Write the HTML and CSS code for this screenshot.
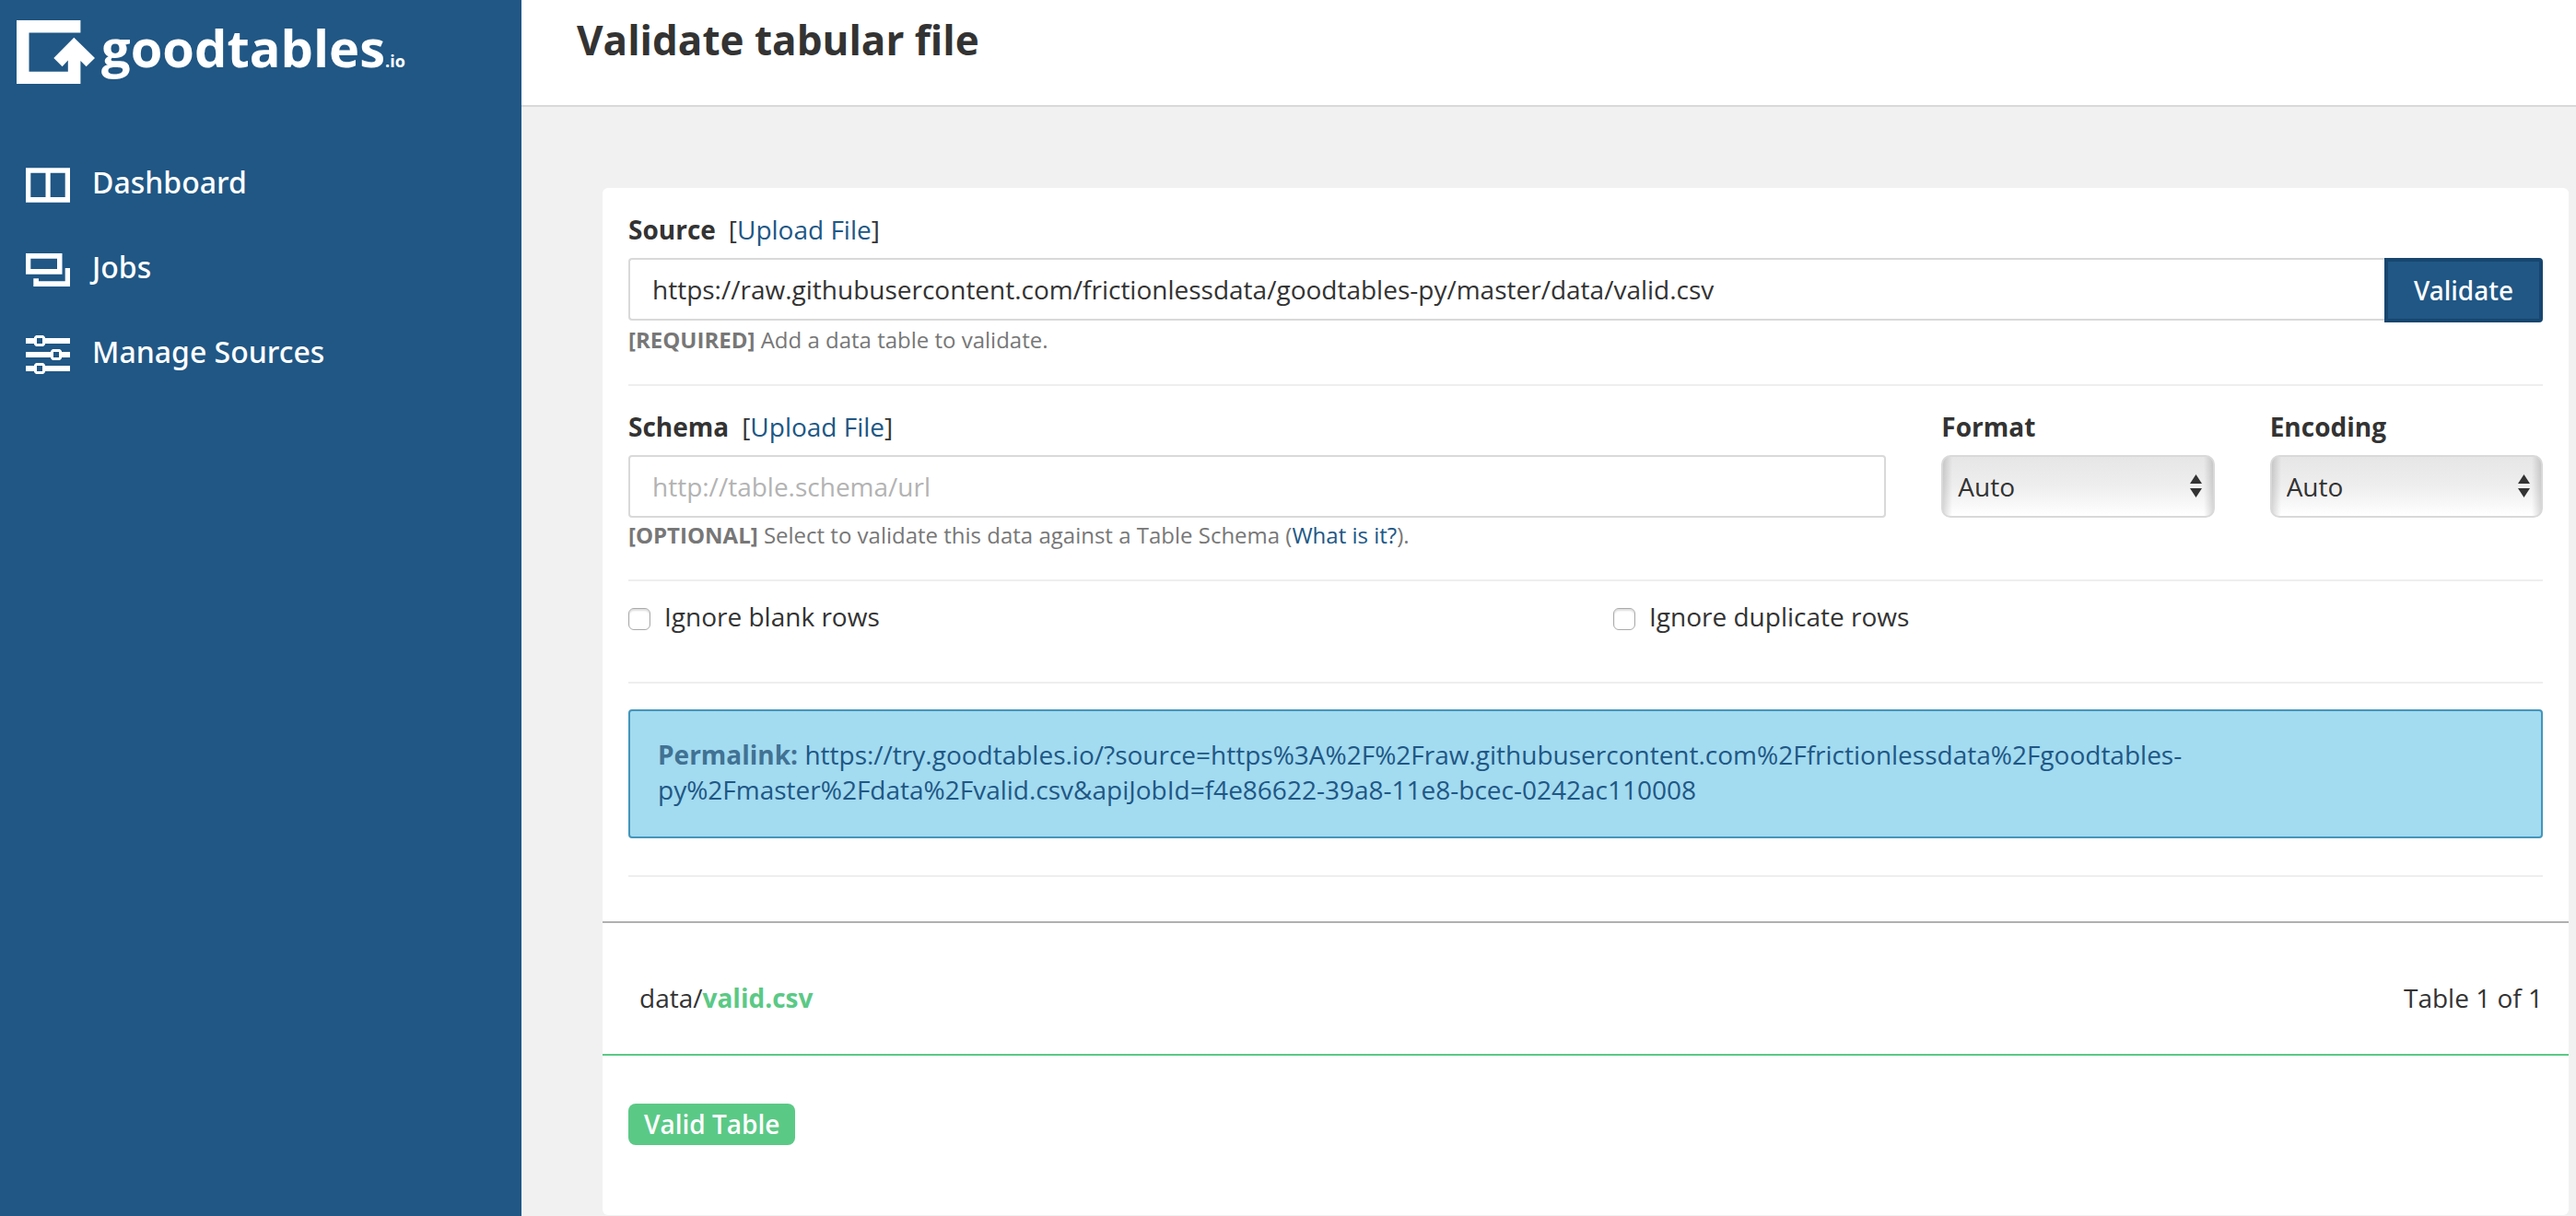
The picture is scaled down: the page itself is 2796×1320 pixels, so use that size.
FILE: index.html
```html
<!DOCTYPE html>
<html lang="en">
<head>
  <meta charset="utf-8">
  <meta name="viewport" content="width=device-width, initial-scale=1">
  <title>Validate tabular file - goodtables.io</title>
  <link rel="stylesheet" href="styles.css">
</head>
<body>
  <div class="app">
    <aside class="sidebar">
      <a class="brand" href="#">
        <svg class="brand-mark" width="86" height="70" viewBox="0 0 86 70" aria-hidden="true">
          <path fill="currentColor" d="M0 0H69.4V13.5H13.5V55.7H55.8V43.5L49.6 50.2L40.3 41L62.3 18.7L85 41L75.6 50.2L69.4 44V69H0Z"/>
        </svg>
        <span class="brand-name">goodtables<span class="brand-tld">.io</span></span>
      </a>
      <nav class="nav">
        <a class="nav-link" href="#">
          <svg class="nav-icon" width="48" height="56" viewBox="0 0 48 56" aria-hidden="true">
            <path fill="currentColor" fill-rule="evenodd" d="M0 12.300H48V49.700H0ZM5.300 17.700V44H21.500V17.700ZM26.700 17.700V44H42.700V17.700Z"/>
          </svg>
          Dashboard
        </a>
        <a class="nav-link" href="#">
          <svg class="nav-icon" width="48" height="56" viewBox="0 0 48 56" aria-hidden="true">
            <path fill="currentColor" fill-rule="evenodd" d="M0 13H39.5V35.7H0ZM5.3 18.7V30H34V18.7ZM42.7 29H48V49H8.3V40.3H14V43.3H42.7Z"/>
          </svg>
          Jobs
        </a>
        <a class="nav-link" href="#">
          <svg class="nav-icon" width="48" height="56" viewBox="0 0 48 56" aria-hidden="true">
            <path fill="currentColor" fill-rule="evenodd" d="M0 13H9V12L11 10H19L21 12V13H48V19H21V20L19 22H11L9 20V19H0ZM12 13V19H18V13ZM0 28H27V27L29 25H37L39 27V28H48V34H39V35L37 37H29L27 35V34H0ZM30 28V34H36V28ZM0 43H9V42L11 40H19L21 42V43H48V49H21V50L19 52H11L9 50V49H0ZM12 43V49H18V43Z"/>
          </svg>
          Manage Sources
        </a>
      </nav>
    </aside>

    <main class="main">
      <header class="page-header">
        <h1 class="page-title">Validate tabular file</h1>
      </header>

      <div class="content">
        <div class="panel">
          <form class="form">
            <section class="section">
              <div class="field-head">
                <label class="field-label" for="source">Source</label>
                <span>[<a href="#">Upload File</a>]</span>
              </div>
              <div class="input-group">
                <input class="text-input" id="source" type="text" value="https://raw.githubusercontent.com/frictionlessdata/goodtables-py/master/data/valid.csv">
                <button class="validate-button" type="submit">Validate</button>
              </div>
              <p class="help"><strong>[REQUIRED]</strong> Add a data table to validate.</p>
            </section>

            <section class="section schema-grid">
              <div class="schema-field">
                <div class="field-head">
                  <label class="field-label" for="schema">Schema</label>
                  <span>[<a href="#">Upload File</a>]</span>
                </div>
                <input class="text-input" id="schema" type="text" placeholder="http://table.schema/url">
                <p class="help"><strong>[OPTIONAL]</strong> Select to validate this data against a Table Schema (<a href="#">What is it?</a>).</p>
              </div>
              <div class="select-field">
                <div class="field-head"><label class="field-label" for="format">Format</label></div>
                <select class="select" id="format"><option>Auto</option></select>
              </div>
              <div class="select-field">
                <div class="field-head"><label class="field-label" for="encoding">Encoding</label></div>
                <select class="select" id="encoding"><option>Auto</option></select>
              </div>
            </section>

            <section class="section options">
              <label class="option"><input class="checkbox" type="checkbox">Ignore blank rows</label>
              <label class="option"><input class="checkbox" type="checkbox">Ignore duplicate rows</label>
            </section>

            <section class="section permalink-section">
              <div class="permalink">
                <strong>Permalink:</strong>
                <a href="#">https://try.goodtables.io/?source=https%3A%2F%2Fraw.githubusercontent.com%2Ffrictionlessdata%2Fgoodtables-py%2Fmaster%2Fdata%2Fvalid.csv&amp;apiJobId=f4e86622-39a8-11e8-bcec-0242ac110008</a>
              </div>
            </section>
          </form>

          <section class="report">
            <div class="report-head">
              <span>data/<strong class="report-file">valid.csv</strong></span>
              <span>Table 1 of 1</span>
            </div>
            <div class="report-body">
              <span class="badge">Valid Table</span>
            </div>
          </section>
        </div>
      </div>
    </main>
  </div>
</body>
</html>
```
FILE: styles.css
```css
*,
*::before,
*::after {
  box-sizing: border-box;
}

body {
  margin: 0;
  background: #f1f1f1;
  color: #333;
  font-family: "Open Sans", "Noto Sans", sans-serif;
  font-size: 28px;
  line-height: 40px;
}

a {
  color: #205785;
  text-decoration: none;
}

.app {
  display: flex;
  min-height: 100vh;
}

/* Sidebar */
.sidebar {
  flex: 0 0 566px;
  background: #205785;
  color: #fff;
}

.brand {
  display: flex;
  align-items: flex-start;
  gap: 6px;
  height: 152px;
  padding: 13px 18px 0;
  color: inherit;
}

.brand-mark {
  margin-top: 9px;
}

.brand-name {
  font-size: 56px;
  font-weight: 700;
  line-height: 76px;
}

.brand-tld {
  font-size: 18px;
}

.nav-link {
  display: flex;
  align-items: center;
  gap: 24px;
  padding: 0 28px;
  color: inherit;
  font-family: "Noto Sans", sans-serif;
  font-size: 32px;
  font-weight: 500;
  line-height: 92px;
}

/* Page */
.main {
  flex: 1;
  min-width: 0;
}

.page-header {
  padding: 13px 60px 41px;
  border-bottom: 2px solid #d9d9d9;
  background: #fff;
}

.page-title {
  margin: 0;
  font-size: 44px;
  font-weight: 700;
  line-height: 60px;
}

.content {
  padding: 88px 8px 0 88px;
}

.panel {
  border-radius: 6px;
  background: #fff;
}

/* Form */
.form {
  padding: 1px 28px 48px;
}

.section {
  padding: 24px 0 31px;
  border-bottom: 2px solid #eee;
}

.field-head {
  display: flex;
  gap: 14px;
  margin-bottom: 11px;
}

.field-label {
  font-weight: 700;
}

.input-group {
  display: flex;
  align-items: flex-start;
}

.text-input {
  display: block;
  width: 100%;
  height: 68px;
  padding: 0 24px;
  border: 2px solid #d9d9d9;
  border-radius: 4px;
  background: #fff;
  color: #333;
  font: inherit;
}

.text-input::placeholder {
  color: #b3b3b3;
  opacity: 1;
}

.input-group .text-input {
  flex: 1;
  border-right: 0;
  border-radius: 4px 0 0 4px;
}

.validate-button {
  height: 70px;
  padding: 0 28px;
  border: 4px solid #17466f;
  border-radius: 0 4px 4px 0;
  background: #205785;
  color: #fff;
  font: inherit;
  font-family: "Noto Sans", sans-serif;
  font-weight: 500;
}

.help {
  margin: 2px 0 0;
  color: #777;
  font-size: 24px;
  line-height: 34px;
}

.schema-grid {
  display: grid;
  grid-template-columns: repeat(12, minmax(0, 1fr));
  column-gap: 60px;
}

.schema-field {
  grid-column: span 8;
}

.select-field {
  grid-column: span 2;
}

.select {
  display: block;
  width: 100%;
  height: 68px;
  padding: 0 40px 0 16px;
  border: 2px solid #d9d9d9;
  border-radius: 10px;
  appearance: none;
  background:
    url("data:image/svg+xml,%3Csvg xmlns='http://www.w3.org/2000/svg' width='13' height='26'%3E%3Cpath fill='%23333' d='M0 10L6.500 0L13 10ZM0 15H13L6.500 25Z'/%3E%3C/svg%3E") right 12px center no-repeat,
    linear-gradient(to right, rgba(0, 0, 0, 0.14), transparent) left / 10px 100% no-repeat,
    linear-gradient(to left, rgba(0, 0, 0, 0.14), transparent) right / 10px 100% no-repeat,
    linear-gradient(#e6e6e6, #eee 50%, #fff);
  color: #333;
  font: inherit;
}

.options {
  display: grid;
  grid-template-columns: repeat(2, minmax(0, 1fr));
  column-gap: 60px;
  padding: 18px 0 51px;
}

.option {
  display: flex;
  gap: 15px;
}

.checkbox {
  width: 24px;
  height: 24px;
  margin: 11px 0 0;
  border: 1px solid #aaa;
  border-radius: 6px;
  appearance: none;
  background: #fff;
  box-shadow: inset 0 2px 2px #ddd;
}

.permalink-section {
  padding: 28px 0 40px;
}

.permalink {
  padding: 28px 30px 32px;
  border: 2px solid #4496bb;
  border-radius: 4px;
  background: #a3dbf0;
  color: #417293;
  line-height: 38px;
}

/* Report */
.report-head {
  display: flex;
  justify-content: space-between;
  padding: 61px 28px 41px 40px;
  border-top: 2px solid #b0b0b0;
  border-bottom: 2px solid #5bc986;
}

.report-file {
  color: #5bc986;
}

.report-body {
  display: flex;
  padding: 52px 28px 76px;
}

.badge {
  padding: 0 17px;
  border-radius: 8px;
  background: #5bc986;
  color: #fff;
  font-weight: 600;
  line-height: 45px;
}
```
